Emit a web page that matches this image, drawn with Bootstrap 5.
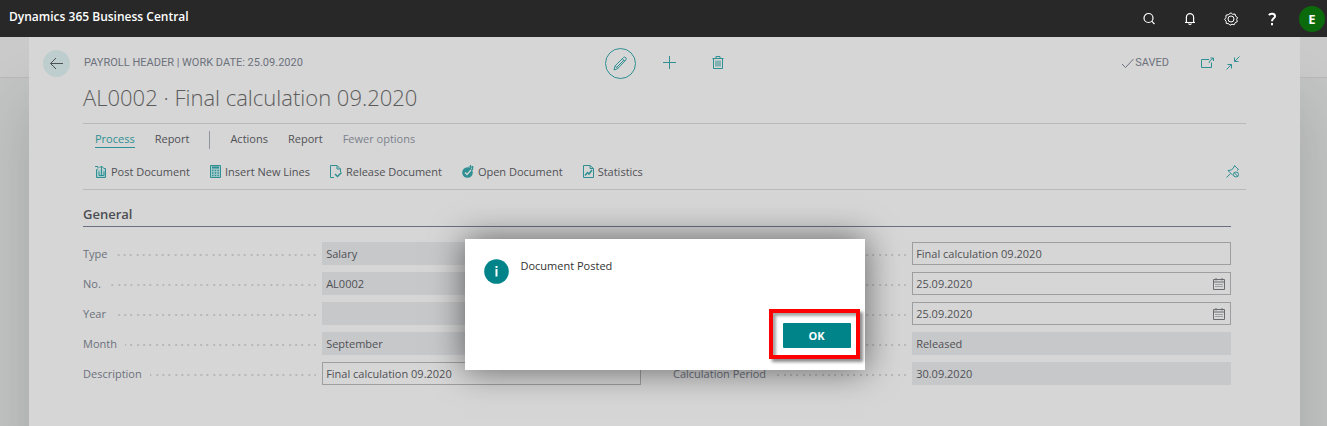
<!DOCTYPE html>
<html lang="en">
<head>
<meta charset="utf-8">
<meta name="viewport" content="width=device-width, initial-scale=1">
<title>Dynamics 365 Business Central</title>
<link href="https://cdn.jsdelivr.net/npm/bootstrap@5.3.0/dist/css/bootstrap.min.css" rel="stylesheet">
<style>
  :root { --teal: #2f8f92; --ink: #505155; --muted-ink: #6c717c; }
  body { font-family: "Open Sans", "Noto Sans", sans-serif; font-size: 11px; line-height: 16px; color: var(--ink); background: #c2c4c3; overflow: hidden; }
  svg { display: block; fill: none; stroke: currentColor; flex-shrink: 0; }
  button { font: inherit; color: inherit; background: none; border: 0; padding: 0; }
  .topbar { height: 37px; background: #282828; color: #fff; padding: 0 2px 4px 9px; position: relative; z-index: 1; }
  .brand-name { font-size: 12px; font-weight: 600; color: #fff; text-decoration: none; }
  .tool-set { gap: 27px; }
  .user-disc { width: 26px; height: 26px; background: #0b6a0b; font-size: 13px; font-weight: 700; margin-left: -7px; }
  .backdrop-area { min-height: calc(100vh - 37px); padding: 0 27px 0 29px; background: linear-gradient(#cacaca 0 40px, #b9b9b9 40px 41px, #c3c5c4 41px); overflow: hidden; }
  .sheet { background: #d6d6d6; padding: 10px 54px 0 54px; box-shadow: 0 64px 60px rgba(0,0,0,.16); }
  .title-row { height: 32px; }
  .back-btn { width: 27px; height: 27px; background: #becdcd; margin-left: -40px; margin-right: 14px; }
  .caps { font-family: Roboto, sans-serif; font-size: 11px; color: var(--muted-ink); }
  .side-group { flex: 1 1 6px; }
  .end-group { padding-right: 6px; }
  .mid-group { gap: 27px; color: var(--teal); }
  .edit-btn { width: 31px; height: 31px; border: 1px solid var(--teal); }
  .page-title { font-size: 22px; font-weight: 300; line-height: 32px; margin: 2px 0 10px; color: #5c5c5c; }
  .action-block { border-top: 1px solid #b9b9b9; border-bottom: 1px solid #b9b9b9; padding: 0 6px 0 12px; height: 67px; }
  .tab-row { height: 31px; gap: 20px; }
  .tab-row a { color: var(--ink); text-decoration: none; line-height: 16px; border-bottom: 1px solid transparent; }
  .tab-row a.chosen { color: var(--teal); border-color: var(--teal); }
  .tab-row a.faint { color: #7c828c; }
  .tab-split { width: 1px; height: 18px; background: #8f949d; }
  .cmd-row { height: 33px; gap: 20px; }
  .cmd-row button { gap: 4px; }
  .cmd-row svg, .teal-ink { color: var(--teal); }
  .tinted { fill: #a9cccd; }
  .form-part { margin-right: 15px; }
  .section-title { font-size: 13px; font-weight: 600; line-height: 20px; margin: 14px 0 15px; padding-bottom: 2px; border-bottom: 1px solid #6b7081; color: #4c4d50; }
  .field-cols { display: grid; grid-template-columns: 1fr 1fr; column-gap: 32px; }
  .field-stack { display: grid; gap: 7px; align-content: start; }
  .field-line { display: grid; grid-template-columns: 3fr 4fr; height: 23px; align-items: center; color: var(--muted-ink); }
  .dots { height: 2px; margin: 2px 6px 0 8px; background: linear-gradient(90deg, transparent 0 4px, #b8b8b8 4px 6px, transparent 6px 11px, #b8b8b8 11px 13px, transparent 13px 17px, #b8b8b8 17px 19px) right center / 19px 2px repeat-x; }
  .field-box { width: 100%; height: 23px; border: 1px solid #9d9ea0; border-radius: 0; background: transparent; padding: 0 3px; color: var(--ink); line-height: 16px; font-size: 11px; }
  .field-box[readonly] { background: #c7c8ca; border-color: #c7c8ca; }
  .date-wrap > button { position: absolute; right: 6px; top: 6px; color: #6b6c70; }
  .dialog-layer { position: absolute; inset: 0; padding-top: 202px; }
  .message-box { width: 400px; height: 131px; background: #fff; color: #333; padding: 19px 14px 22px 19px; box-shadow: 0 0 32px rgba(0,0,0,.55); }
  .info-disc { color: #008489; margin: 1px 12px 0 0; }
  .ok-wrap { position: relative; }
  .ok-wrap::after { content: ""; position: absolute; inset: -14px -9px -11px -14px; border: 4px solid #f00; box-shadow: 3px 3px 3px rgba(0,0,0,.45), inset 3px 3px 3px rgba(0,0,0,.35); pointer-events: none; }
  .ok-btn { width: 68px; height: 25px; background: #008489; color: #fff; font-weight: 700; border-radius: 1px; }
</style>
</head>
<body>
<header class="topbar d-flex align-items-center justify-content-between">
  <a class="brand-name" href="#">Dynamics 365 Business Central</a>
  <div class="tool-set d-flex align-items-center pt-1">
    <button aria-label="Search"><svg width="14" height="14" viewBox="0 0 14 14" stroke-width="1.2"><circle cx="6.5" cy="6" r="4.5"/><path d="M9.8 9.3 12.500 12"/></svg></button>
    <button aria-label="Notifications"><svg width="14" height="14" viewBox="0 0 14 14" stroke-width="1.2"><path d="M2 10.5h10M3.4 10.5V5.2a3.6 3.6 0 0 1 7.200 0v5.300M5.500 11.500q1.500 2 3 0"/></svg></button>
    <button aria-label="Settings"><svg width="14" height="14" viewBox="0 0 14 14"><path d="M7 .8 8.700 2.300 11 2l.6 2.200L13.500 5.500 12.700 7.500l.6 2.200-2.100 1L10.200 12.800 8 12.200 6 13.300 4.600 11.700 2.300 11.500 2.100 9.200.7 7.500 1.900 5.500 2 3.200l2.300-.5z"/><circle cx="7" cy="7" r="3"/></svg></button>
    <button aria-label="Help"><svg width="14" height="14" viewBox="0 0 14 14" stroke-width="2"><path d="M4 3.300C5 1.200 10 1.200 10 4.200 10 6.400 7 6.400 7 9.300"/><path d="M7 11v2.200"/></svg></button>
    <button class="user-disc rounded-circle">E</button>
  </div>
</header>
<main class="backdrop-area d-flex">
  <div class="sheet position-relative flex-grow-1">
    <div class="title-row d-flex align-items-center">
      <div class="side-group d-flex align-items-center">
        <button class="back-btn rounded-circle d-flex align-items-center justify-content-center" aria-label="Back"><svg width="15" height="13" viewBox="0 0 15 13"><path d="M14 6.500H1.500M7 1 1.500 6.500 7 12"/></svg></button>
        <span class="caps">PAYROLL HEADER | WORK DATE: 25.09.2020</span>
      </div>
      <div class="mid-group d-flex align-items-center">
        <button class="edit-btn rounded-circle d-flex align-items-center justify-content-center" aria-label="Edit"><svg width="15" height="15" viewBox="0 0 15 15"><path d="m1 14 1.200-4.200 8.300-8.300q1.300-.9 2.300.2t0 2.300L4.800 12.500zM2.200 9.800l2.600 2.700M9.300 2.800l2.700 2.600M11 4 4 11"/></svg></button>
        <button class="me-2" aria-label="New"><svg width="14" height="14" viewBox="0 0 14 14"><path d="M0 6.500h13M6.500 0v13"/></svg></button>
        <button aria-label="Delete"><svg width="12" height="14" viewBox="0 0 12 14"><path d="M.5 2.500h11M1.500 2.500v10h9v-10M4 2.500v-2h4v2M4 4.500v6M6 4.500v6M8 4.500v6"/></svg></button>
      </div>
      <div class="side-group end-group d-flex align-items-center justify-content-end">
        <span class="caps d-flex align-items-center"><svg width="14" height="12" viewBox="0 0 14 12"><path d="m1 7 3.500 3.500L12.500 2"/></svg>SAVED</span>
        <button class="teal-ink ms-4 ps-2" aria-label="Open in new window"><svg width="13" height="12" viewBox="0 0 13 12"><path d="M8 2.500H.5v8h10v-5M8 6q.5-3 4-4.500M9.500 1h3v3"/></svg></button>
        <button class="teal-ink ms-2 ps-1" aria-label="Collapse"><svg width="14" height="14" viewBox="0 0 14 14"><path d="M13.500.5 8.500 5.500M8.500 1.500v4h4M.5 13.500l5-5M1.500 8.500h4v4"/></svg></button>
      </div>
    </div>
    <h1 class="page-title">AL0002 · Final calculation 09.2020</h1>
    <div class="action-block">
      <nav class="tab-row d-flex align-items-center">
        <a class="chosen" href="#">Process</a>
        <a href="#">Report</a>
        <span class="tab-split"></span>
        <a href="#">Actions</a>
        <a href="#">Report</a>
        <a class="faint" href="#">Fewer options</a>
      </nav>
      <div class="cmd-row d-flex align-items-center">
        <button class="d-flex align-items-center"><svg width="12" height="13" viewBox="0 0 12 13"><path class="tinted" d="M1.500 4.500h9v8h-9z" stroke="none"/><path d="M2.500 4.500h-1v8h9v-9h-2M0 1.500h3v2M6.500 6V1M4.500 3l2-2 2 2M4 6.500v4h5v-4M6.500 6v4"/></svg>Post Document</button>
        <button class="d-flex align-items-center"><svg width="11" height="13" viewBox="0 0 11 13"><path class="tinted" d="M.5.500h10v12H.5z"/><path d="M2 2.500h7" stroke-width="2"/><path d="M2 5.500h7M2 8h7M2 10.500h7" stroke-width="1.500" stroke-dasharray="1.500 1.200"/></svg>Insert New Lines</button>
        <button class="d-flex align-items-center"><svg width="12" height="13" viewBox="0 0 12 13"><path d="M4 12.500H.5V.5H7l3.500 3.500v3M7 .5V4h3.500"/><path d="m5 9 2.500 2.500 4-4" stroke-width="1.500"/></svg>Release Document</button>
        <button class="d-flex align-items-center"><svg width="12" height="13" viewBox="0 0 12 13"><circle cx="5.500" cy="7.500" r="5.300" fill="currentColor" stroke="none"/><path d="m3 7.500 2 2 4-4.500" stroke="#d6d6d6" stroke-width="1.300"/><path d="M8.500 0v4M6.500 2h5M10.500 1v4" stroke-width="1.200"/></svg>Open Document</button>
        <button class="d-flex align-items-center"><svg width="11" height="13" viewBox="0 0 11 13"><path d="M.5.500H7l3.500 3v9H.5zM7 .5v3h3.500"/><path d="m2 10.500 2.500-3 1.500 1.500L9 5" stroke-width="1.500"/></svg>Statistics</button>
        <button class="ms-auto" aria-label="Unpin"><svg width="14" height="13" viewBox="0 0 14 13"><path d="m.5 12.500 4-4M2 5.500l5 5M2 5.500l3.500-.5L8 2l.5-1.500 4 4L11 5.500"/><circle cx="10" cy="9.500" r="2.500"/><path d="m8.200 7.700 3.600 3.600"/></svg></button>
      </div>
    </div>
    <form class="form-part">
      <h2 class="section-title">General</h2>
      <div class="field-cols">
        <div class="field-stack">
          <div class="field-line"><div class="d-flex align-items-center"><label for="f-type">Type</label><span class="dots flex-grow-1"></span></div><input class="field-box" id="f-type" value="Salary" readonly></div>
          <div class="field-line"><div class="d-flex align-items-center"><label for="f-no">No.</label><span class="dots flex-grow-1"></span></div><input class="field-box" id="f-no" value="AL0002" readonly></div>
          <div class="field-line"><div class="d-flex align-items-center"><label for="f-year">Year</label><span class="dots flex-grow-1"></span></div><input class="field-box" id="f-year" readonly></div>
          <div class="field-line"><div class="d-flex align-items-center"><label for="f-month">Month</label><span class="dots flex-grow-1"></span></div><input class="field-box" id="f-month" value="September" readonly></div>
          <div class="field-line"><div class="d-flex align-items-center"><label for="f-desc">Description</label><span class="dots flex-grow-1"></span></div><input class="field-box" id="f-desc" value="Final calculation 09.2020"></div>
        </div>
        <div class="field-stack">
          <div class="field-line"><span class="dots"></span><input class="field-box" aria-label="Posting description" value="Final calculation 09.2020"></div>
          <div class="field-line"><span class="dots"></span><div class="date-wrap position-relative"><input class="field-box" aria-label="Posting date" value="25.09.2020"><button type="button" aria-label="Pick a date"><svg width="12" height="12" viewBox="0 0 12 12"><path d="M.5 1.500h11v10H.5zM.5 4h11M3 0v2.500M9 0v2.500"/><path d="M2.500 6.500h7M2.500 8.500h7" stroke-dasharray="1 1"/></svg></button></div></div>
          <div class="field-line"><span class="dots"></span><div class="date-wrap position-relative"><input class="field-box" aria-label="Document date" value="25.09.2020"><button type="button" aria-label="Pick a date"><svg width="12" height="12" viewBox="0 0 12 12"><path d="M.5 1.500h11v10H.5zM.5 4h11M3 0v2.500M9 0v2.500"/><path d="M2.500 6.500h7M2.500 8.500h7" stroke-dasharray="1 1"/></svg></button></div></div>
          <div class="field-line"><span class="dots"></span><input class="field-box" aria-label="Status" value="Released" readonly></div>
          <div class="field-line"><div class="d-flex align-items-center"><label for="f-period">Calculation Period</label><span class="dots flex-grow-1"></span></div><input class="field-box" id="f-period" value="30.09.2020" readonly></div>
        </div>
      </div>
    </form>
    <div class="dialog-layer d-flex justify-content-center align-items-start">
      <div class="message-box d-flex flex-column justify-content-between" role="dialog" aria-modal="true">
        <div class="d-flex align-items-start">
          <svg class="info-disc" width="25" height="25" viewBox="0 0 25 25"><circle cx="12.500" cy="12.500" r="12.300" fill="currentColor" stroke="none"/><path d="M12.500 10v7.500M12.500 7v2" stroke="#fff" stroke-width="2"/></svg>
          <div>Document Posted</div>
        </div>
        <div class="ok-wrap align-self-end"><button class="ok-btn d-block">OK</button></div>
      </div>
    </div>
  </div>
</main>
<script src="https://cdn.jsdelivr.net/npm/bootstrap@5.3.0/dist/js/bootstrap.bundle.min.js"></script>
</body>
</html>
